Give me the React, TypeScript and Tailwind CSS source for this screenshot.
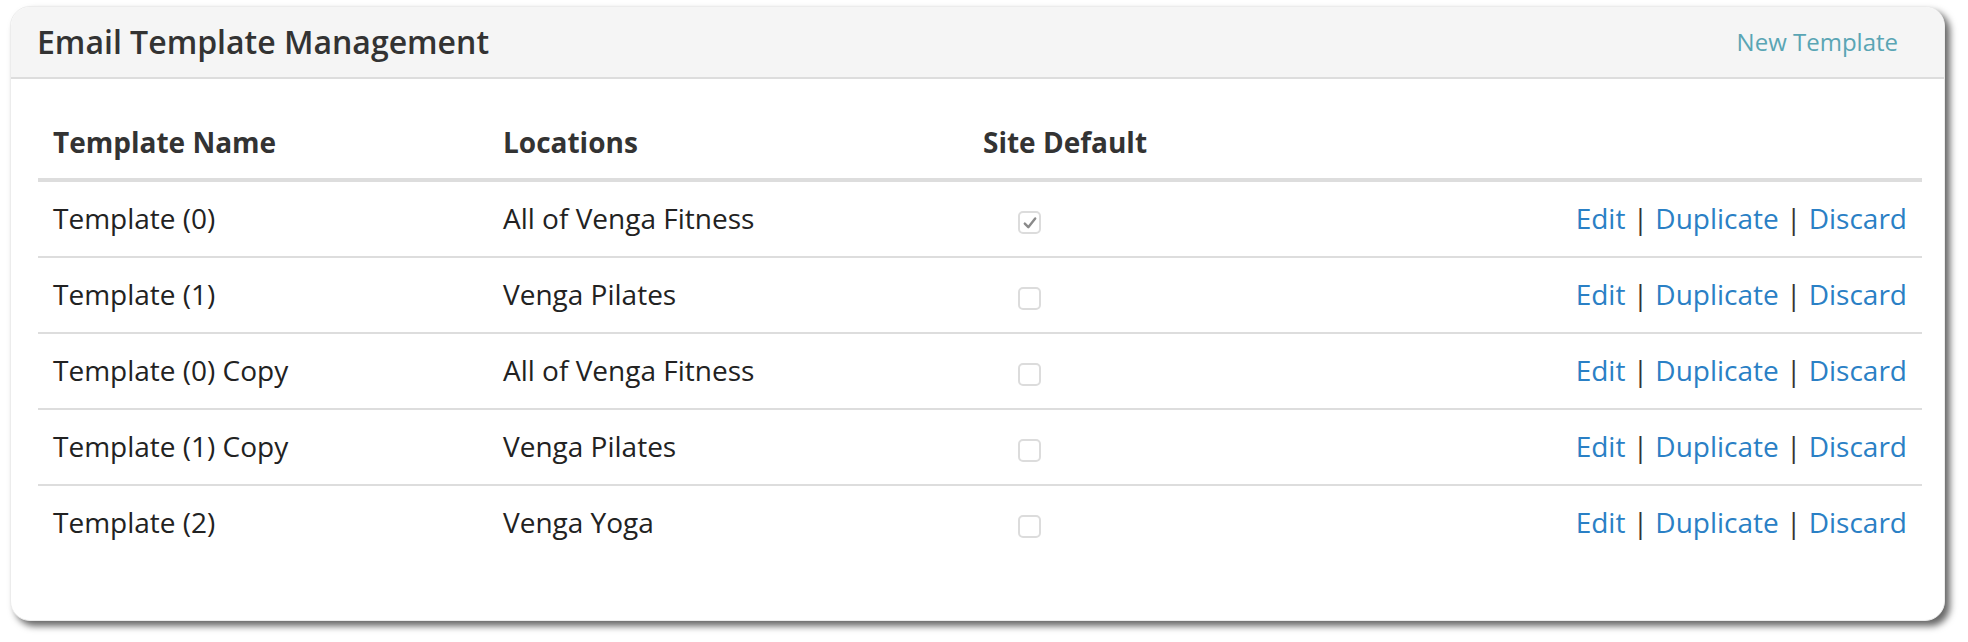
import React from 'react';

type Template = {
  name: string;
  location: string;
  isDefault: boolean;
};

const templates: Template[] = [
  { name: 'Template (0)', location: 'All of Venga Fitness', isDefault: true },
  { name: 'Template (1)', location: 'Venga Pilates', isDefault: false },
  { name: 'Template (0) Copy', location: 'All of Venga Fitness', isDefault: false },
  { name: 'Template (1) Copy', location: 'Venga Pilates', isDefault: false },
  { name: 'Template (2)', location: 'Venga Yoga', isDefault: false },
];

// Disabled-looking checkbox, drawn by hand so it matches the screenshot
function SiteDefaultBox({ checked }: { checked: boolean }) {
  return (
    <span className="ml-[35px] flex h-[23px] w-[23px] items-center justify-center rounded-[5px] border-2 border-[#dcdcdc] bg-white">
      {checked && (
        <svg viewBox="0 0 16 16" className="h-[16px] w-[16px]" aria-hidden="true">
          <path d="M2.8 8.6 L6.3 12.2 L13.2 3.4" fill="none" stroke="#8a8a8a" strokeWidth="2.4" strokeLinecap="round" strokeLinejoin="round" />
        </svg>
      )}
    </span>
  );
}

const cols = 'grid grid-cols-[450px_480px_1fr_auto] items-center';

export default function App() {
  return (
    <div className="min-h-[642px] bg-white pl-[10px] pt-[6px] font-['Open_Sans',sans-serif] text-[#333]">
      <div className="flex h-[615px] w-[1935px] flex-col overflow-hidden rounded-[20px] border border-[#ececec] bg-white shadow-[5px_5px_7px_rgba(0,0,0,0.6)]">
        {/* Panel heading */}
        <div className="flex h-[72px] shrink-0 items-center justify-between border-b-2 border-[#dddddd] bg-[#f5f5f5] pl-[26px] pr-[46px]">
          <h3 className="text-[32px] font-semibold leading-none text-[#333]">Email Template Management</h3>
          <a href="#" className="text-[24px] text-[#5aa5b4]">New Template</a>
        </div>

        {/* Panel body */}
        <div className="pl-[27px] pr-[22px] pt-[27px]">
          <div className={`${cols} border-b-4 border-[#dddddd] text-[28px] font-bold leading-[40px]`}>
            <div className="px-[15px] py-[16px]">Template Name</div>
            <div className="px-[15px] py-[16px]">Locations</div>
            <div className="px-[15px] py-[16px]">Site Default</div>
            <div className="px-[15px] py-[16px]" />
          </div>

          {templates.map((t, i) => (
            <div
              key={t.name}
              className={`${cols} text-[28px] leading-[40px] ${i > 0 ? 'border-t-2 border-[#dddddd]' : ''}`}
            >
              <div className="px-[15px] pb-[18px] pt-[16px] text-[#222]">{t.name}</div>
              <div className="px-[15px] pb-[18px] pt-[16px] text-[#222]">{t.location}</div>
              <div className="flex px-[15px] pb-[17px] pt-[24px]">
                <SiteDefaultBox checked={t.isDefault} />
              </div>
              <div className="px-[15px] pb-[18px] pt-[16px] text-right">
                <a href="#" className="text-[#2a80c5]">Edit</a>
                <span className="text-[#333]"> | </span>
                <a href="#" className="text-[#2a80c5]">Duplicate</a>
                <span className="text-[#333]"> | </span>
                <a href="#" className="text-[#2a80c5]">Discard</a>
              </div>
            </div>
          ))}
        </div>
      </div>
    </div>
  );
}
